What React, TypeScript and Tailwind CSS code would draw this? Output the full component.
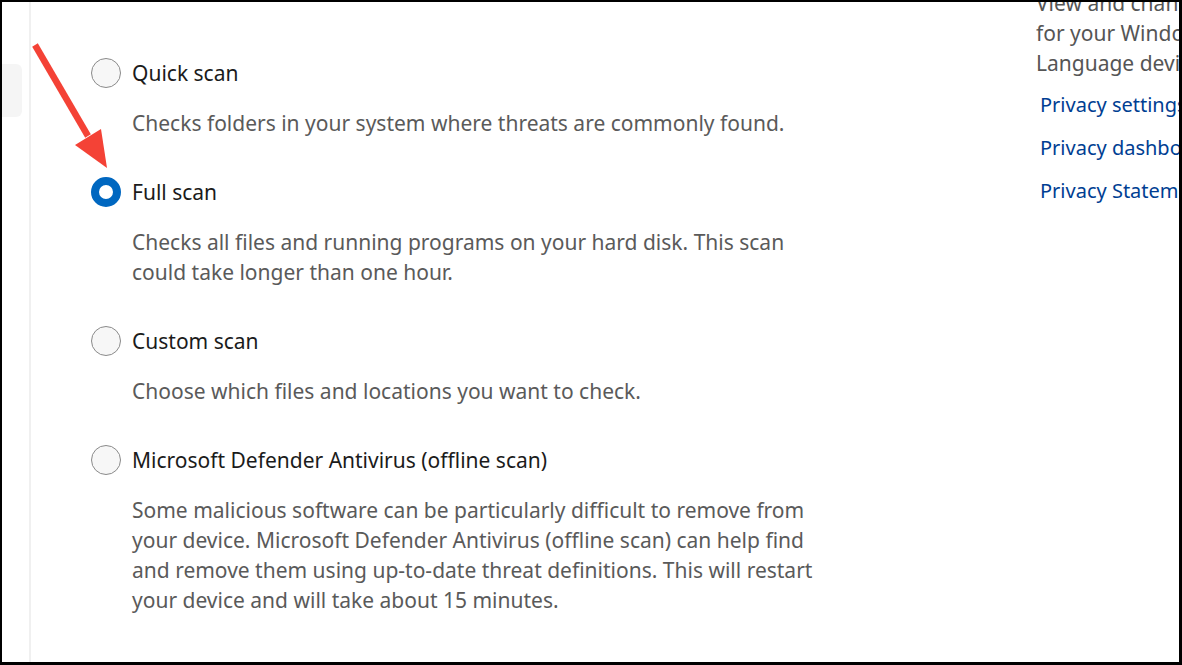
import React from "react";

interface ScanOption {
  label: string;
  lines: string[];
  selected?: boolean;
}

const options: ScanOption[] = [
  {
    label: "Quick scan",
    lines: ["Checks folders in your system where threats are commonly found."],
  },
  {
    label: "Full scan",
    lines: [
      "Checks all files and running programs on your hard disk. This scan",
      "could take longer than one hour.",
    ],
    selected: true,
  },
  {
    label: "Custom scan",
    lines: ["Choose which files and locations you want to check."],
  },
  {
    label: "Microsoft Defender Antivirus (offline scan)",
    lines: [
      "Some malicious software can be particularly difficult to remove from",
      "your device. Microsoft Defender Antivirus (offline scan) can help find",
      "and remove them using up-to-date threat definitions. This will restart",
      "your device and will take about 15 minutes.",
    ],
  },
];

const Radio = ({ selected }: { selected?: boolean }) =>
  selected ? (
    <span className="w-[30px] h-[30px] rounded-full border-[8px] border-[#0067c0] bg-white shrink-0" />
  ) : (
    <span className="w-[30px] h-[30px] rounded-full border border-[#8a8a8a] bg-[#f7f7f7] shrink-0" />
  );

const Arrow = () => (
  <svg
    className="absolute left-0 top-0 pointer-events-none"
    width="130"
    height="180"
    viewBox="0 0 130 180"
  >
    <line
      x1="33"
      y1="43"
      x2="86"
      y2="134"
      stroke="#f44236"
      strokeWidth="6.5"
      strokeLinecap="butt"
    />
    <polygon points="73,143 99,127 105,166" fill="#f44236" />
  </svg>
);

const App = () => {
  return (
    <div
      className="relative w-[1182px] h-[665px] overflow-hidden bg-white border-l-2 border-t-2 border-r-[3px] border-b-[3px] border-black flex"
      style={{ fontFamily: '"Noto Sans", "Open Sans", sans-serif' }}
    >
      {/* left nav stub */}
      <div className="w-[27px] shrink-0 pt-[62px]">
        <div className="w-[20px] h-[53px] bg-[#f5f5f5] rounded-r-md" />
      </div>
      <div className="w-[2px] shrink-0 bg-[#f0f0f0]" />

      {/* main options */}
      <div className="w-[1005px] shrink-0 pl-[60px] pt-[56px]">
        {options.map((opt, i) => (
          <div key={i} className={i > 0 ? "mt-[39px]" : ""}>
            <div className="flex items-center h-[30px] gap-[11px]">
              <Radio selected={opt.selected} />
              <span className="text-[21px] leading-[30px] text-[#1b1b1b] whitespace-nowrap">
                {opt.label}
              </span>
            </div>
            <div className="mt-[20px] pl-[41px] text-[21px] leading-[30px] text-[#5a5a5a] whitespace-nowrap">
              {opt.lines.map((l, j) => (
                <div key={j}>{l}</div>
              ))}
            </div>
          </div>
        ))}
      </div>

      {/* right related column */}
      <div className="flex-1 overflow-hidden whitespace-nowrap -mt-[14px]">
        <div className="text-[21px] leading-[30px] text-[#555555]">
          <div>View and change privacy settings</div>
          <div>for your Windows 11 Pro device</div>
          <div>Language device</div>
        </div>
        <div className="pl-[4px] mt-[12px] flex flex-col gap-[13px] text-[20px] leading-[30px] text-[#003e92]">
          <span>Privacy settings</span>
          <span>Privacy dashboard</span>
          <span>Privacy Statement</span>
        </div>
      </div>

      <Arrow />
    </div>
  );
};

export default App;
